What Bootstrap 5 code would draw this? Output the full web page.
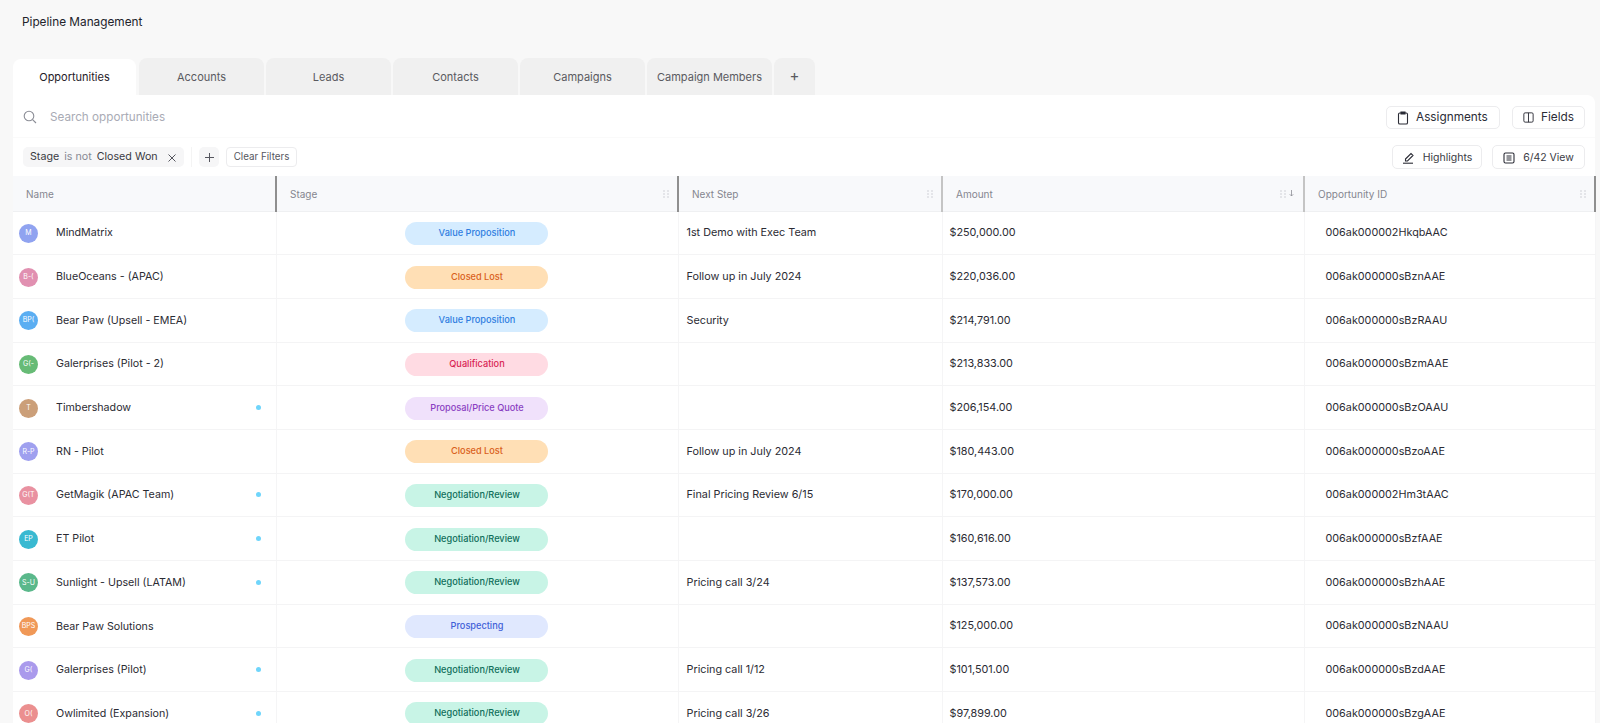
<!doctype html>
<html lang="en"><head><meta charset="utf-8"><title>Pipeline Management</title>
<link href="https://cdn.jsdelivr.net/npm/bootstrap@5.3.0/dist/css/bootstrap.min.css" rel="stylesheet">
<style>
html,body{height:723px;overflow:hidden}
body{background:#f8f8f8;font-family:Inter,"Liberation Sans",sans-serif;font-size:10.8px;color:#2b2b33}
.page-title{font-size:11.8px;font-weight:400;color:#22232b;margin:0;padding:14px 0 0 22px;height:58px;line-height:17px}
.tabstrip{margin-left:13px;gap:2px;height:37px}
.tabitem{width:125px;height:37px;display:flex;align-items:center;justify-content:center;background:#f0f0f0;color:#5a5a60;border-radius:8px 8px 0 0;font-size:11px;padding-top:2px}
.tabitem.on{background:#fff;color:#1f2028;width:123px;margin-right:1px;height:36px;margin-top:1px;padding-top:1px}
.tabitem.add{width:41px;font-size:15px;padding-top:0}
.panel{background:#fff;margin-left:13px;width:1582px;height:640px;border-radius:0 8px 0 0}
.searchrow{height:43px;padding:2px 10px 0;border-bottom:1px solid #fafafa}
.searchtext{color:#a9abb5;font-size:11.7px;margin-left:13px;padding-top:2px}
.tbtn{height:23px;border:1px solid #ececee;border-radius:5px;background:#fff;color:#2b2c36;font-size:11.8px;display:flex;align-items:center;gap:7px;padding:1px 10px 0}
.filterrow{height:38px;padding:0 10px}
.chip{height:20px;background:#f6f6f7;border-radius:5px;padding:1px 7px 0;display:flex;align-items:center;gap:5px;font-size:10.7px;width:161px;color:#3a3a42;white-space:nowrap}
.chip em{font-style:normal;color:#888a93}
.vline{width:1px;height:20px;background:#f4f4f4;margin:0 7px}
.plusbox{width:20px;height:20px;background:#f6f6f7;border-radius:5px;display:flex;align-items:center;justify-content:center}
.clearbtn{height:20px;width:71px;margin-left:7px;border:1px solid #ececee;border-radius:4px;font-size:9.8px;color:#55565e;display:flex;align-items:center;justify-content:center;padding-top:1px}
.hbtn{height:24px;border:1px solid #ececee;border-radius:5px;color:#3a3b44;font-size:10.5px;display:flex;align-items:center;justify-content:center;gap:8px;padding-top:1px}
.datatable{table-layout:fixed;width:1582px;margin:0;font-size:10.8px;--bs-table-bg:transparent;border-collapse:collapse}
.datatable th{height:35px;background:#f8f9fb;font-weight:400;color:#85868f;font-size:10px;padding:2px 0 0 13px;border-bottom:1px solid #eff0f2;vertical-align:middle;position:relative}
.datatable th.sepd{border-right:2px solid #8f8f8f}
.datatable th.sepl{border-right:2px solid #c4c4c4}
.datatable td{height:43.7px;padding:1px 0 0;vertical-align:middle;border-bottom:1px solid #f4f4f5;border-right:1px solid #f5f5f6;color:#2b2b33}
.grip{position:absolute;top:14px;right:8px;width:6px;height:8px;color:#c2c3c9}
.sortarrow{position:absolute;top:14px;right:9px;color:#8d8e96}
.namecell{display:flex;align-items:center;padding-left:6px;position:relative}
.avatar{width:19px;height:19px;border-radius:50%;color:#fff;font-size:7px;display:flex;align-items:center;justify-content:center;opacity:.95;flex:none;box-shadow:0 0 0 1px #fff}
.namecell span.nm{margin-left:18px;font-size:10.7px}
.dot{position:absolute;right:15px;top:50%;margin-top:-3px;width:5px;height:5px;border-radius:50%;background:#6fd5fb}
.stagepill{display:block;width:143px;height:23px;margin-left:128px;line-height:22px;text-align:center;border-radius:12px;font-size:9.2px;font-weight:500;padding-left:2px}
.v{background:#d5ecff;color:#2f7ddf}.c{background:#ffdfb5;color:#d9601c}.q{background:#ffdbe3;color:#d92654}.p{background:#f0e1fb;color:#8a3fc2}.n{background:#c8f4e6;color:#0f6e5a}.s{background:#e0e8fe;color:#3f5fd8}
.pl1{padding-left:8px!important}.pl2{padding-left:7px!important}.pl3{padding-left:21px!important}
</style></head>
<body>
<h1 class="page-title">Pipeline Management</h1>
<div class="nav tabstrip">
  <div class="tabitem on">Opportunities</div><div class="tabitem">Accounts</div><div class="tabitem">Leads</div><div class="tabitem">Contacts</div><div class="tabitem">Campaigns</div><div class="tabitem">Campaign Members</div><div class="tabitem add">+</div>
</div>
<div class="panel">
  <div class="searchrow d-flex align-items-center">
    <svg width="14" height="14" viewBox="0 0 14 14" fill="none" stroke="#8b8d96" stroke-width="1.1"><circle cx="6" cy="6" r="4.8"/><path d="M9.6 9.6 13 13"/></svg>
    <span class="searchtext">Search opportunities</span>
    <div class="ms-auto d-flex gap-2">
      <div class="tbtn" style="width:114px"><svg width="12" height="14" viewBox="0 0 12 14" fill="none" stroke="#2b2c36" stroke-width="1.1"><rect x="1.5" y="2" width="9" height="11" rx="1.3"/><path d="M4 1h4v2H4z" fill="#2b2c36"/></svg>Assignments</div>
      <div class="tbtn ms-1" style="width:73px"><svg width="13" height="13" viewBox="0 0 13 13" fill="none" stroke="#2b2c36" stroke-width="1.1"><rect x="1" y="1" width="11" height="11" rx="1.5"/><path d="M6.5 1v11"/></svg>Fields</div>
    </div>
  </div>
  <div class="filterrow d-flex align-items-center">
    <div class="chip"><span>Stage</span><em>is not</em><span>Closed Won</span><svg class="ms-auto" width="10" height="10" viewBox="0 0 10 10" stroke="#55565e" stroke-width="1"><path d="M1.5 1.5l7 7M8.5 1.5l-7 7"/></svg></div>
    <div class="vline"></div>
    <div class="plusbox"><svg width="11" height="11" viewBox="0 0 11 11" stroke="#55565e" stroke-width="1"><path d="M5.5 1v9M1 5.500h9"/></svg></div>
    <div class="clearbtn">Clear Filters</div>
    <div class="ms-auto d-flex">
      <div class="hbtn" style="width:90px;margin-right:10px"><svg width="13" height="13" viewBox="0 0 13 13" fill="none" stroke="#2b2c36" stroke-width="1.1"><path d="M3.500 8 9 2.500l2 2L5.500 10H3.500z"/><path d="M1 12.200h10"/></svg>Highlights</div>
      <div class="hbtn" style="width:93px"><svg width="12" height="12" viewBox="0 0 12 12" fill="none" stroke="#2b2c36" stroke-width="1.100"><rect x="1" y="1" width="10" height="10" rx="1.500"/><path d="M3.500 4h5M3.500 6h5M3.500 8h5"/></svg>6/42 View</div>
    </div>
  </div>
  <table class="table datatable">
    <colgroup><col style="width:263px"><col style="width:402px"><col style="width:264px"><col style="width:362px"><col style="width:291px"></colgroup>
    <thead><tr>
      <th class="sepd">Name</th>
      <th class="sepd">Stage<svg class="grip" viewBox="0 0 6 8" fill="currentColor"><circle cx="1" cy="1" r=".7"/><circle cx="5" cy="1" r=".7"/><circle cx="1" cy="4" r=".7"/><circle cx="5" cy="4" r=".7"/><circle cx="1" cy="7" r=".7"/><circle cx="5" cy="7" r=".7"/></svg></th>
      <th class="sepl">Next Step<svg class="grip" viewBox="0 0 6 8" fill="currentColor"><circle cx="1" cy="1" r=".7"/><circle cx="5" cy="1" r=".7"/><circle cx="1" cy="4" r=".7"/><circle cx="5" cy="4" r=".7"/><circle cx="1" cy="7" r=".7"/><circle cx="5" cy="7" r=".7"/></svg></th>
      <th class="sepl">Amount<svg class="grip" style="right:17px" viewBox="0 0 6 8" fill="currentColor"><circle cx="1" cy="1" r=".7"/><circle cx="5" cy="1" r=".7"/><circle cx="1" cy="4" r=".7"/><circle cx="5" cy="4" r=".7"/><circle cx="1" cy="7" r=".7"/><circle cx="5" cy="7" r=".7"/></svg><svg class="sortarrow" width="5" height="7" viewBox="0 0 5 7" fill="none" stroke="currentColor" stroke-width=".8"><path d="M2.500 0v6M.8 4.300l1.700 1.700 1.700-1.700"/></svg></th>
      <th class="sepd">Opportunity ID<svg class="grip" viewBox="0 0 6 8" fill="currentColor"><circle cx="1" cy="1" r=".7"/><circle cx="5" cy="1" r=".7"/><circle cx="1" cy="4" r=".7"/><circle cx="5" cy="4" r=".7"/><circle cx="1" cy="7" r=".7"/><circle cx="5" cy="7" r=".7"/></svg></th>
    </tr></thead>
    <tbody>
      <tr><td><div class="namecell"><span class="avatar" style="background:#8b9ff0">M</span><span class="nm">MindMatrix</span></div></td><td><span class="stagepill v">Value Proposition</span></td><td class="pl1">1st Demo with Exec Team</td><td class="pl2">$250,000.00</td><td class="pl3">006ak000002HkqbAAC</td></tr>
      <tr><td><div class="namecell"><span class="avatar" style="background:#e08bad">B-(</span><span class="nm">BlueOceans - (APAC)</span></div></td><td><span class="stagepill c">Closed Lost</span></td><td class="pl1">Follow up in July 2024</td><td class="pl2">$220,036.00</td><td class="pl3">006ak000000sBznAAE</td></tr>
      <tr><td><div class="namecell"><span class="avatar" style="background:#53aaf2">BP(</span><span class="nm">Bear Paw (Upsell - EMEA)</span></div></td><td><span class="stagepill v">Value Proposition</span></td><td class="pl1">Security</td><td class="pl2">$214,791.00</td><td class="pl3">006ak000000sBzRAAU</td></tr>
      <tr><td><div class="namecell"><span class="avatar" style="background:#5fb86f">G(-</span><span class="nm">Galerprises (Pilot - 2)</span></div></td><td><span class="stagepill q">Qualification</span></td><td class="pl1"></td><td class="pl2">$213,833.00</td><td class="pl3">006ak000000sBzmAAE</td></tr>
      <tr><td><div class="namecell"><span class="avatar" style="background:#c99a72">T</span><span class="nm">Timbershadow</span><i class="dot"></i></div></td><td><span class="stagepill p">Proposal/Price Quote</span></td><td class="pl1"></td><td class="pl2">$206,154.00</td><td class="pl3">006ak000000sBzOAAU</td></tr>
      <tr><td><div class="namecell"><span class="avatar" style="background:#9a9bef">R-P</span><span class="nm">RN - Pilot</span></div></td><td><span class="stagepill c">Closed Lost</span></td><td class="pl1">Follow up in July 2024</td><td class="pl2">$180,443.00</td><td class="pl3">006ak000000sBzoAAE</td></tr>
      <tr><td><div class="namecell"><span class="avatar" style="background:#e88c9c">G(T</span><span class="nm">GetMagik (APAC Team)</span><i class="dot"></i></div></td><td><span class="stagepill n">Negotiation/Review</span></td><td class="pl1">Final Pricing Review 6/15</td><td class="pl2">$170,000.00</td><td class="pl3">006ak000002Hm3tAAC</td></tr>
      <tr><td><div class="namecell"><span class="avatar" style="background:#2fb6cf">EP</span><span class="nm">ET Pilot</span><i class="dot"></i></div></td><td><span class="stagepill n">Negotiation/Review</span></td><td class="pl1"></td><td class="pl2">$160,616.00</td><td class="pl3">006ak000000sBzfAAE</td></tr>
      <tr><td><div class="namecell"><span class="avatar" style="background:#52b585">S-U</span><span class="nm">Sunlight - Upsell (LATAM)</span><i class="dot"></i></div></td><td><span class="stagepill n">Negotiation/Review</span></td><td class="pl1">Pricing call 3/24</td><td class="pl2">$137,573.00</td><td class="pl3">006ak000000sBzhAAE</td></tr>
      <tr><td><div class="namecell"><span class="avatar" style="background:#f0934f">BPS</span><span class="nm">Bear Paw Solutions</span></div></td><td><span class="stagepill s">Prospecting</span></td><td class="pl1"></td><td class="pl2">$125,000.00</td><td class="pl3">006ak000000sBzNAAU</td></tr>
      <tr><td><div class="namecell"><span class="avatar" style="background:#a695ec">G(</span><span class="nm">Galerprises (Pilot)</span><i class="dot"></i></div></td><td><span class="stagepill n">Negotiation/Review</span></td><td class="pl1">Pricing call 1/12</td><td class="pl2">$101,501.00</td><td class="pl3">006ak000000sBzdAAE</td></tr>
      <tr><td><div class="namecell"><span class="avatar" style="background:#ea8a8a">O(</span><span class="nm">Owlimited (Expansion)</span><i class="dot"></i></div></td><td><span class="stagepill n">Negotiation/Review</span></td><td class="pl1">Pricing call 3/26</td><td class="pl2">$97,899.00</td><td class="pl3">006ak000000sBzgAAE</td></tr>
    </tbody>
  </table>
</div>
</body></html>
